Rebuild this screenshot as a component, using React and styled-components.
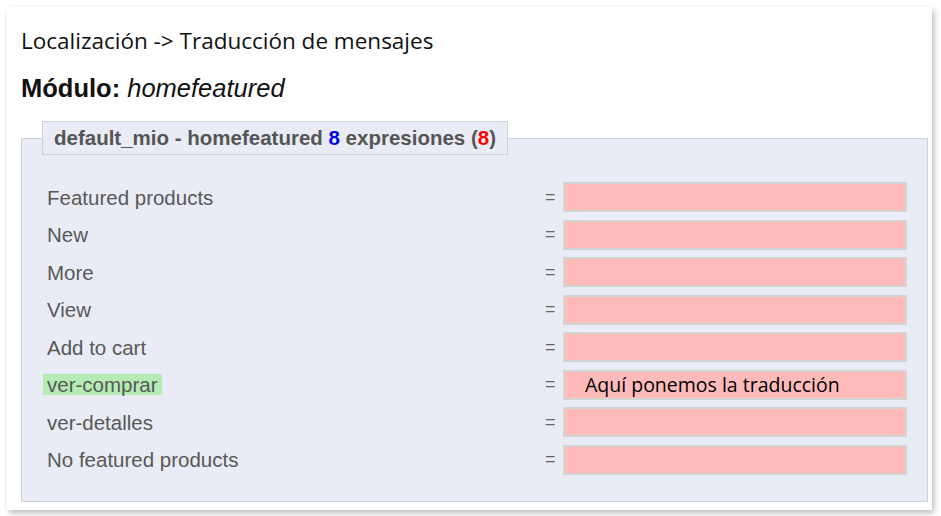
import React from 'react';
import styled, { createGlobalStyle } from 'styled-components';

const GlobalStyle = createGlobalStyle`
  html, body {
    margin: 0;
    padding: 0;
    background: #ffffff;
  }
  body {
    padding: 7px 9px 6px 7px;
  }
`;

const Card = styled.div`
  background: #ffffff;
  box-shadow: 2px 3px 6px rgba(0, 0, 0, 0.28);
  padding: 14px 4px 10px 14px;
  height: 503px;
  box-sizing: border-box;
  display: flex;
  flex-direction: column;
`;

const Title = styled.div`
  font-family: "Open Sans", sans-serif;
  font-size: 22.5px;
  color: #111;
  line-height: 40px;
`;

const ModuleTitle = styled.div`
  font-family: "Liberation Sans", Arial, sans-serif;
  font-weight: bold;
  font-size: 25.5px;
  color: #111;
  line-height: 30px;
  margin-top: 12px;

  em {
    font-weight: normal;
    font-style: italic;
  }
`;

const Fieldset = styled.fieldset`
  margin: 18px 0 0 0;
  padding: 0 20px 26px 20px;
  background: #e9ecf5;
  border: 1px solid #cfd2d8;
  flex: 1;
  min-width: 0;
`;

const Legend = styled.legend`
  font-family: "Liberation Sans", Arial, sans-serif;
  font-weight: bold;
  font-size: 20.5px;
  color: #555;
  background: #e9ecf5;
  border: 1px solid #cfd2d8;
  padding: 6px 11px;
  line-height: 20px;
`;

const Count = styled.span`
  color: ${props => props.red ? '#ff0000' : '#0000ee'};
`;

const Rows = styled.div`
  display: flex;
  flex-direction: column;
  gap: 7.5px;
  margin-top: 27px;
`;

const Row = styled.div`
  display: grid;
  grid-template-columns: 1fr 36px 344px;
  align-items: center;
  height: 30px;
`;

const Label = styled.span`
  font-family: "Liberation Sans", Arial, sans-serif;
  font-size: 20.5px;
  color: #585858;
  justify-self: start;
  padding: 0 4px;
  margin-left: 1px;
  line-height: 21px;
  background: ${props => props.highlight ? '#b4ecb4' : 'transparent'};
`;

const Equals = styled.span`
  font-family: "Liberation Sans", Arial, sans-serif;
  font-size: 18px;
  color: #666;
  padding-left: 18px;
`;

const Input = styled.div`
  height: 30px;
  box-sizing: border-box;
  background: #ffbaba;
  border: 2px solid #d4d4d4;
  font-family: "Open Sans", sans-serif;
  font-size: 19.5px;
  color: #000;
  padding-left: 20px;
  line-height: 26px;
`;

const rows = [
  { key: 'Featured products' },
  { key: 'New' },
  { key: 'More' },
  { key: 'View' },
  { key: 'Add to cart' },
  { key: 'ver-comprar', highlight: true, value: 'Aquí ponemos la traducción' },
  { key: 'ver-detalles' },
  { key: 'No featured products' },
];

const App = () => {
  return (
    <>
      <GlobalStyle />
      <Card>
        <Title>Localización -&gt; Traducción de mensajes</Title>
        <ModuleTitle>Módulo: <em>homefeatured</em></ModuleTitle>
        <Fieldset>
          <Legend>
            default_mio - homefeatured <Count>8</Count> expresiones (<Count red>8</Count>)
          </Legend>
          <Rows>
            {rows.map(row => (
              <Row key={row.key}>
                <Label highlight={row.highlight}>{row.key}</Label>
                <Equals>=</Equals>
                <Input>{row.value}</Input>
              </Row>
            ))}
          </Rows>
        </Fieldset>
      </Card>
    </>
  );
};

export default App;
